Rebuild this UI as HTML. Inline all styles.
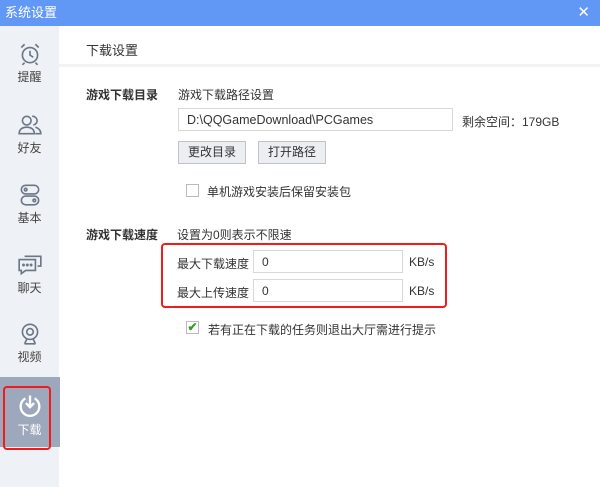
<!DOCTYPE html>
<html><head><meta charset="utf-8"><style>
*{margin:0;padding:0;box-sizing:border-box}
body{width:600px;height:487px;overflow:hidden;background:#fff;font-family:"Liberation Sans","Noto Sans CJK SC",sans-serif;font-size:12px;color:#333;position:relative}
.a{position:absolute}
.title{left:0;top:0;width:600px;height:26px;background:#6197f5;color:#fff;font-size:13px;line-height:25px;padding-left:5px}
.side{left:0;top:26px;width:59px;height:461px;background:#eef1f5}
.item{position:absolute;left:0;width:59px;text-align:center;color:#444;font-size:12px}
.item svg{display:block;margin:0 auto 1px}
.in{border:1px solid #d8d8d8;background:#fff;height:23px;line-height:22px;padding-left:8px;color:#333}
.btn{border:1px solid #bfc3c9;background:#eceef1;height:23px;line-height:21px;text-align:center;color:#333}
.cb{width:13px;height:13px;border:1px solid #bbb;background:#fff}
.red{border:2px solid #f21b1b;border-radius:4px}
</style></head><body>
<div class="a title">系统设置<span class="a" style="right:10px;top:0;font-size:15px">✕</span></div>
<div class="a side"></div>
<div class="item" style="top:41px"><svg width="26" height="26" viewBox="0 0 24 24" fill="none" stroke="#6b7686" stroke-width="1.5"><circle cx="12" cy="13" r="7"/><path d="M12 9v4l3 2M4 6l3-3M20 6l-3-3M7 20l-2 2M17 20l2 2"/></svg>提醒</div>
<div class="item" style="top:112px"><svg width="26" height="26" viewBox="0 0 24 24" fill="none" stroke="#6b7686" stroke-width="1.5"><circle cx="9" cy="8" r="4"/><path d="M2 20c0-4 3-6 7-6s7 2 7 6zM14 4a4 4 0 0 1 1 8M17 14c3 1 5 3 5 6h-5"/></svg>好友</div>
<div class="item" style="top:182px"><svg width="26" height="26" viewBox="0 0 24 24" fill="none" stroke="#6b7686" stroke-width="1.5"><rect x="4" y="3" width="16" height="8" rx="4"/><rect x="4" y="13" width="16" height="8" rx="4"/><circle cx="8" cy="7" r="1.2"/><circle cx="16" cy="17" r="1.2"/></svg>基本</div>
<div class="item" style="top:252px"><svg width="26" height="26" viewBox="0 0 24 24" fill="none" stroke="#6b7686" stroke-width="1.5"><path d="M2 7h15v10H8l-4 3v-3H2z"/><path d="M7 4h15v9h-3"/><circle cx="6" cy="12" r=".6"/><circle cx="9.5" cy="12" r=".6"/><circle cx="13" cy="12" r=".6"/></svg>聊天</div>
<div class="item" style="top:321px"><svg width="26" height="26" viewBox="0 0 24 24" fill="none" stroke="#6b7686" stroke-width="1.5"><circle cx="12" cy="10" r="7"/><circle cx="12" cy="10" r="3"/><path d="M7 21h10M9 17l-2 4M15 17l2 4"/></svg>视频</div>
<div class="a" style="left:0;top:377px;width:60px;height:70px;background:#9ea8bc"></div>
<div class="item" style="top:392px;color:#fff"><svg width="28" height="28" viewBox="0 0 24 24" fill="none" stroke="#fff" stroke-width="2"><path d="M8 5.5A8 8 0 1 0 16 5.5"/><path d="M12 3v10M8.5 9.5L12 13l3.5-3.5"/></svg>下载</div>
<div class="a red" style="left:3px;top:386px;width:48px;height:64px"></div>
<div class="a" style="left:86px;top:40px;font-size:13px;color:#333">下载设置</div>
<div class="a" style="left:59px;top:64px;width:541px;height:3px;background:#f2f3f5"></div>
<div class="a" style="left:86px;top:86px;font-weight:bold">游戏下载目录</div>
<div class="a" style="left:178px;top:86px">游戏下载路径设置</div>
<div class="a in" style="left:178px;top:108px;width:275px;font-size:12.5px">D:\QQGameDownload\PCGames</div>
<div class="a" style="left:462px;top:113px">剩余空间：179GB</div>
<div class="a btn" style="left:178px;top:141px;width:68px">更改目录</div>
<div class="a btn" style="left:258px;top:141px;width:68px">打开路径</div>
<div class="a cb" style="left:186px;top:184px"></div>
<div class="a" style="left:207px;top:183px">单机游戏安装后保留安装包</div>
<div class="a" style="left:86px;top:226px;font-weight:bold">游戏下载速度</div>
<div class="a" style="left:177px;top:226px">设置为0则表示不限速</div>
<div class="a red" style="left:161px;top:243px;width:286px;height:65px"></div>
<div class="a" style="left:177px;top:255px">最大下载速度</div>
<div class="a in" style="left:253px;top:250px;width:150px">0</div>
<div class="a" style="left:409px;top:255px">KB/s</div>
<div class="a" style="left:177px;top:284px">最大上传速度</div>
<div class="a in" style="left:253px;top:279px;width:150px">0</div>
<div class="a" style="left:409px;top:284px">KB/s</div>
<div class="a cb" style="left:186px;top:321px;font-size:12px;line-height:11px;color:#3a9b2a;text-align:center;font-weight:bold">✔</div>
<div class="a" style="left:208px;top:321px">若有正在下载的任务则退出大厅需进行提示</div>
</body></html>
